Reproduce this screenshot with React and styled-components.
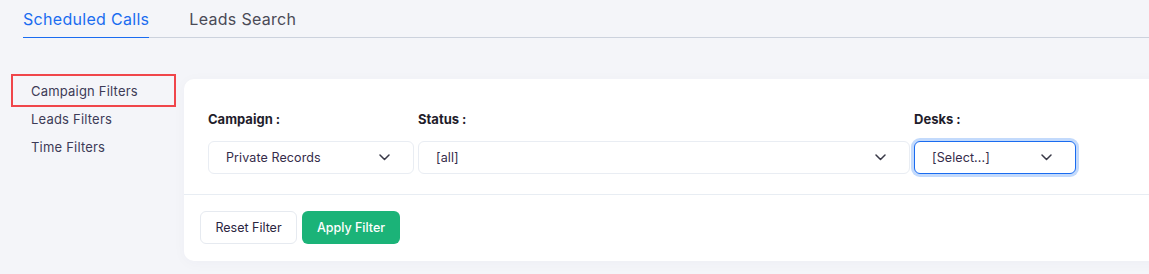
import React from "react";
import styled, { createGlobalStyle } from "styled-components";

const Global = createGlobalStyle`
  html, body { margin: 0; padding: 0; }
  body {
    background: #f4f5f9;
    font-family: Inter, "Open Sans", Arial, sans-serif;
    overflow: hidden;
    width: 1149px;
    height: 274px;
  }
  * { box-sizing: border-box; }
`;

const Page = styled.div`
  width: 1149px;
  height: 274px;
  overflow: hidden;
`;

const TabBar = styled.div`
  display: flex;
  gap: 40px;
  margin-left: 23px;
  height: 38px;
  border-bottom: 1px solid #ccd2dd;
`;

const Tab = styled.div`
  font-size: 16px;
  line-height: 38px;
  height: 38px;
  color: ${(p) => (p.$active ? "#1a6cf0" : "#4a4a56")};
  border-bottom: 1px solid ${(p) => (p.$active ? "#1a6cf0" : "transparent")};
  margin-bottom: -1px;
  letter-spacing: 0.3px;
`;

const Main = styled.div`
  display: flex;
  align-items: flex-start;
  gap: 10px;
  margin-top: 38px;
  padding-left: 13px;
  margin-right: -20px;
`;

const Sidebar = styled.ul`
  list-style: none;
  margin: 0;
  padding: 0;
  width: 161px;
  flex-shrink: 0;
`;

const SideItem = styled.li`
  height: ${(p) => (p.$active ? "29px" : "28px")};
  line-height: ${(p) => (p.$active ? "30px" : "28px")};
  padding-left: 18px;
  font-size: 13px;
  letter-spacing: 0.2px;
  color: #3d3b57;
  outline: ${(p) => (p.$active ? "2px solid #f0464b" : "none")};
`;

const Card = styled.div`
  flex: 1;
  margin-top: 3px;
  background: #ffffff;
  border-radius: 10px;
  box-shadow: 0 2px 14px rgba(30, 40, 80, 0.03);
`;

const FilterRow = styled.div`
  display: flex;
  gap: 4px;
  padding: 32px 24px 20px;
  border-bottom: 1px solid #e8edf3;
`;

const Field = styled.div`
  width: ${(p) => p.$w}px;
  flex-shrink: 0;
`;

const Label = styled.div`
  font-size: 13px;
  font-weight: 700;
  color: #1f1d2b;
  height: 16px;
  line-height: 16px;
  margin-bottom: 14px;
`;

const Select = styled.div`
  display: flex;
  align-items: center;
  justify-content: space-between;
  height: 33px;
  padding: 0 23px 0 17px;
  font-size: 12.5px;
  letter-spacing: 0.1px;
  color: #352c4a;
  background: #fff;
  border-radius: 6px;
  border: ${(p) => (p.$focus ? "1.5px solid #1a6cf0" : "1px solid #e9edf3")};
  box-shadow: ${(p) => (p.$focus ? "0 0 0 3px #c3dafc" : "none")};
`;

const Footer = styled.div`
  display: flex;
  gap: 5px;
  padding: 16px 16px 17px;
`;

const Button = styled.button`
  height: 33px;
  width: ${(p) => p.$w}px;
  border-radius: 6px;
  font-family: inherit;
  font-size: 12.5px;
  font-weight: ${(p) => (p.$primary ? 500 : 400)};
  color: ${(p) => (p.$primary ? "#ffffff" : "#2a2540")};
  background: ${(p) => (p.$primary ? "#1bb378" : "#ffffff")};
  border: ${(p) => (p.$primary ? "none" : "1px solid #e6eaf0")};
  padding: 0;
`;

const Chevron = () => (
  <svg width="11" height="7" viewBox="0 0 11 7" fill="none">
    <path d="M1 1l4.5 4.5L10 1" stroke="#3a3a48" strokeWidth="1.5" strokeLinecap="round" strokeLinejoin="round" />
  </svg>
);

export default function App() {
  return (
    <Page>
      <Global />
      <TabBar>
        <Tab $active>Scheduled Calls</Tab>
        <Tab>Leads Search</Tab>
      </TabBar>
      <Main>
        <Sidebar>
          <SideItem $active>Campaign Filters</SideItem>
          <SideItem>Leads Filters</SideItem>
          <SideItem>Time Filters</SideItem>
        </Sidebar>
        <Card>
          <FilterRow>
            <Field $w={206}>
              <Label>Campaign :</Label>
              <Select>
                <span>Private Records</span>
                <Chevron />
              </Select>
            </Field>
            <Field $w={492}>
              <Label>Status :</Label>
              <Select>
                <span>[all]</span>
                <Chevron />
              </Select>
            </Field>
            <Field $w={162}>
              <Label>Desks :</Label>
              <Select $focus>
                <span>[Select...]</span>
                <Chevron />
              </Select>
            </Field>
          </FilterRow>
          <Footer>
            <Button $w={97}>Reset Filter</Button>
            <Button $w={98} $primary>Apply Filter</Button>
          </Footer>
        </Card>
      </Main>
    </Page>
  );
}
